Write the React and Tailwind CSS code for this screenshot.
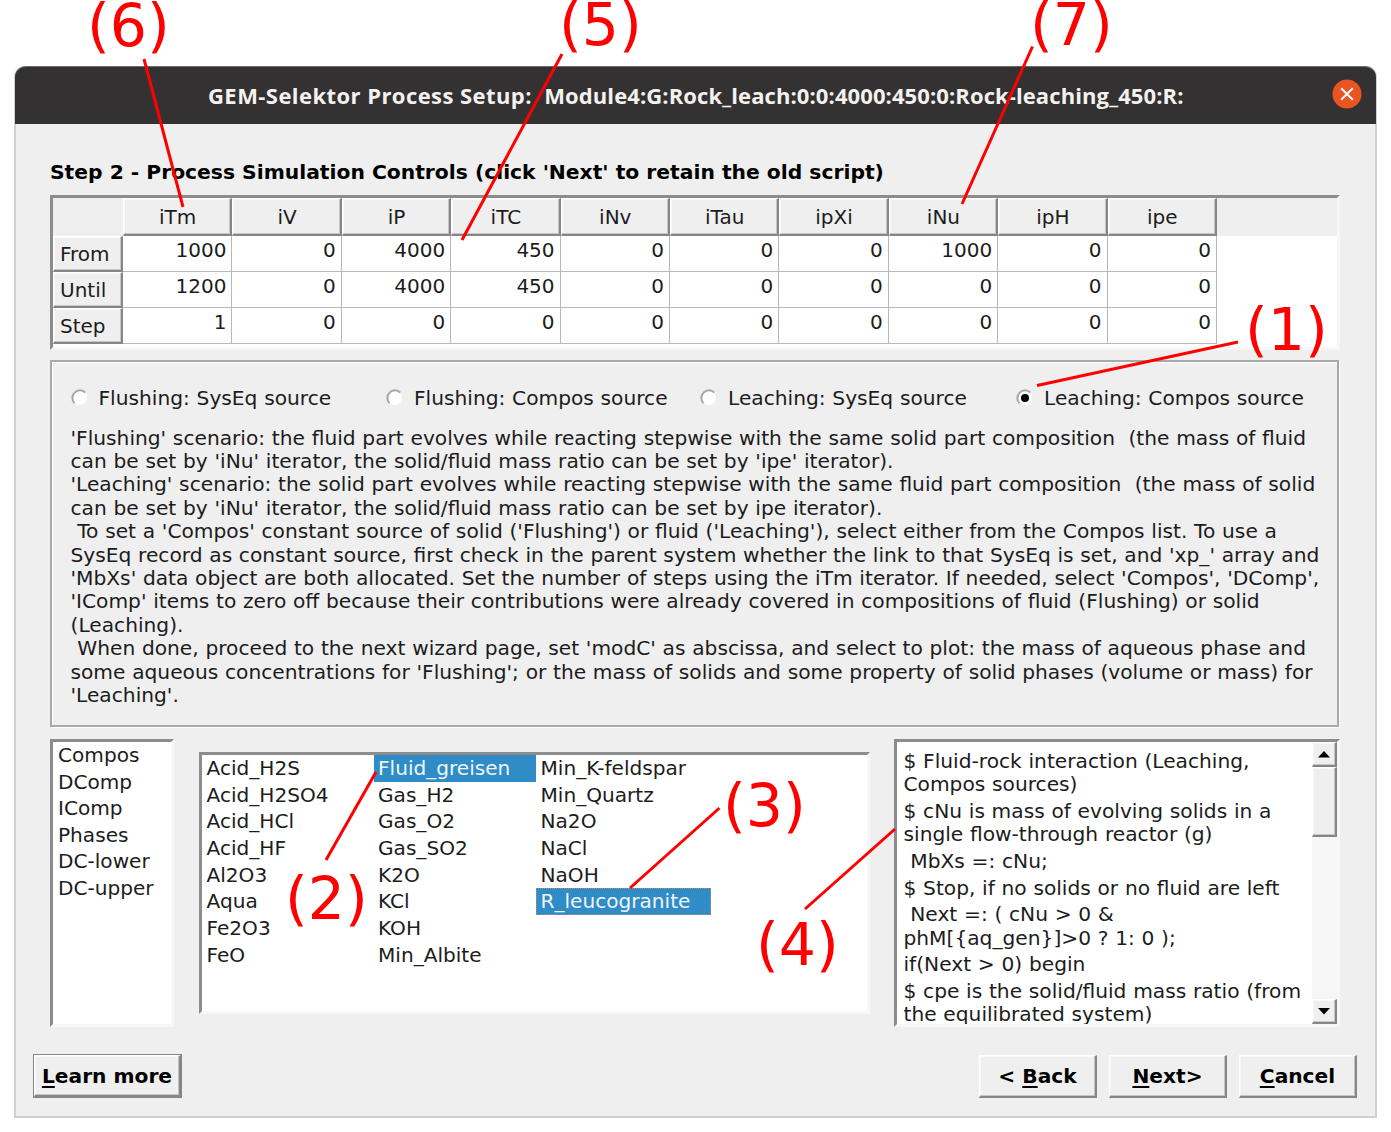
const columns = ["iTm", "iV", "iP", "iTC", "iNv", "iTau", "ipXi", "iNu", "ipH", "ipe"];
const rows = [
  ["From", 1000, 0, 4000, 450, 0, 0, 0, 1000, 0, 0],
  ["Until", 1200, 0, 4000, 450, 0, 0, 0, 0, 0, 0],
  ["Step", 1, 0, 0, 0, 0, 0, 0, 0, 0, 0],
];

const radios = [
  { label: "Flushing: SysEq source", cls: "w-[315.5px]" },
  { label: "Flushing: Compos source", cls: "w-[314px]" },
  { label: "Leaching: SysEq source", cls: "w-[316px]" },
  { label: "Leaching: Compos source", cls: "", checked: true },
];

const help = [
  "'Flushing' scenario: the fluid part evolves while reacting stepwise with the same solid part composition  (the mass of fluid",
  "can be set by 'iNu' iterator, the solid/fluid mass ratio can be set by 'ipe' iterator).",
  "'Leaching' scenario: the solid part evolves while reacting stepwise with the same fluid part composition  (the mass of solid",
  "can be set by 'iNu' iterator, the solid/fluid mass ratio can be set by ipe iterator).",
  " To set a 'Compos' constant source of solid ('Flushing') or fluid ('Leaching'), select either from the Compos list. To use a",
  "SysEq record as constant source, first check in the parent system whether the link to that SysEq is set, and 'xp_' array and",
  "'MbXs' data object are both allocated. Set the number of steps using the iTm iterator. If needed, select 'Compos', 'DComp',",
  "'IComp' items to zero off because their contributions were already covered in compositions of fluid (Flushing) or solid",
  "(Leaching).",
  " When done, proceed to the next wizard page, set 'modC' as abscissa, and select to plot: the mass of aqueous phase and",
  "some aqueous concentrations for 'Flushing'; or the mass of solids and some property of solid phases (volume or mass) for",
  "'Leaching'.",
];

const kinds = ["Compos", "DComp", "IComp", "Phases", "DC-lower", "DC-upper"];

const items = [
  { cls: "w-[171.5px]", list: ["Acid_H2S", "Acid_H2SO4", "Acid_HCl", "Acid_HF", "Al2O3", "Aqua", "Fe2O3", "FeO"] },
  { cls: "w-[162.5px]", list: ["Fluid_greisen", "Gas_H2", "Gas_O2", "Gas_SO2", "K2O", "KCl", "KOH", "Min_Albite"] },
  { cls: "w-[174.5px]", list: ["Min_K-feldspar", "Min_Quartz", "Na2O", "NaCl", "NaOH", "R_leucogranite"] },
];

const itemStyle = {
  Fluid_greisen: "bg-[#308cc6] text-[#eef5fa]",
  R_leucogranite: "bg-[#308cc6] text-[#eef5fa] outline-1 -outline-offset-1 outline-dotted outline-[#b98a6c]",
};

const script = [
  ["$ Fluid-rock interaction (Leaching,", "Compos sources)"],
  ["$ cNu is mass of evolving solids in a", "single flow-through reactor (g)"],
  [" MbXs =: cNu;"],
  ["$ Stop, if no solids or no fluid are left"],
  [" Next =: ( cNu > 0 &", "phM[{aq_gen}]>0 ? 1: 0 );"],
  ["if(Next > 0) begin"],
  ["$ cpe is the solid/fluid mass ratio (from", "the equilibrated system)"],
];

const sunken =
  "border-3 border-t-[#8c8c8c] border-l-[#8c8c8c] border-r-[#f7f7f7] border-b-[#f7f7f7] bg-white";
const raised =
  "border-t border-l border-r-2 border-b-2 border-t-white border-l-white border-r-[#868686] border-b-[#868686] bg-[#efefef] shadow-[inset_-1px_-1px_0_#c6c6c6,inset_1px_1px_0_#f8f8f8]";

function Radio({ checked }) {
  return (
    <svg className="mt-[1px] -ml-px mr-px h-5 w-5 shrink-0" viewBox="0 0 20 20">
      <circle cx="10" cy="10" r="8" fill="#fff" />
      <path d="M4.6 15.4A7.6 7.6 0 0 1 15.4 4.6" fill="none" stroke="#a6a6a6" strokeWidth="2" />
      <path d="M15.6 4.6A7.8 7.8 0 0 1 4.6 15.6" fill="none" stroke="#ebebeb" strokeWidth="1" />
      {checked && <circle cx="10" cy="10" r="4" fill="#000" />}
    </svg>
  );
}

function ArrowButton({ down }) {
  return (
    <div className={`flex h-[25px] w-full shrink-0 items-center justify-center ${raised}`}>
      <svg width="12" height="7" viewBox="0 0 12 7">
        <path d={down ? "M0 0H12L6 6.5Z" : "M0 6.5H12L6 0Z"} fill="#000" />
      </svg>
    </div>
  );
}

function Button({ before, hot, after, cls }) {
  return (
    <button className={`flex items-center justify-center whitespace-pre pt-[2px] text-[20.2px] font-bold text-black ${raised} ${cls}`}>
      <span>
        {before}
        <span className="underline decoration-2 underline-offset-3">{hot}</span>
        {after}
      </span>
    </button>
  );
}

const notes = [
  { n: 6, cls: "left-[87px] top-[-3px]", line: [144, 59, 183, 207] },
  { n: 5, cls: "left-[559px] top-[-4px]", line: [562, 54, 462, 240] },
  { n: 7, cls: "left-[1030px] top-[-4px]", line: [1032.5, 46.5, 962, 204] },
  { n: 1, cls: "left-[1245px] top-[301px]", line: [1238, 342, 1037, 385.5] },
  { n: 2, cls: "left-[285px] top-[870px]", line: [376, 772, 326, 860] },
  { n: 3, cls: "left-[723px] top-[777px]", line: [719.5, 808, 630, 888] },
  { n: 4, cls: "left-[756px] top-[916px]", line: [895, 829, 805, 909] },
];

export default function App() {
  return (
    <div className="relative h-[1132px] w-[1391px] overflow-hidden bg-white pt-[66px] pl-[14px] font-['DejaVu_Sans',sans-serif] text-[20px] leading-[23.4px] text-[#1c1c1c]">
      <div className="flex h-[1052px] w-[1363px] flex-col rounded-t-[11px] border-2 border-t-0 border-[#d0d0d0] bg-[#efefef]">
        <header className="-mx-px flex h-[58px] shrink-0 items-center rounded-t-[11px] border-t border-[#6a6a6a] bg-[#333132] pr-[14px] pl-[193px]">
          <h1 className="flex-1 whitespace-pre font-['Open_Sans',sans-serif] text-[22px] font-bold tracking-[0.09px] text-[#f4f2ee]">
            <span className="tracking-[0.44px]">GEM-Selektor Process Setup:  </span>
            Module4:G:Rock_leach:0:0:4000:450:0:Rock-leaching_450:R:
          </h1>
          <svg className="mb-[3px]" width="30" height="30" viewBox="0 0 30 30">
            <circle cx="15" cy="15" r="14.5" fill="#e95420" />
            <path d="M9.2 9.2L20.8 20.8M20.8 9.2L9.2 20.8" stroke="#fff" strokeWidth="2" />
          </svg>
        </header>

        <main className="flex flex-col pl-[34px] pt-[37px]">
          <h2 className="h-[34px] whitespace-pre text-[20.3px] font-bold text-black">
            Step 2 - Process Simulation Controls (click 'Next' to retain the old script)
          </h2>

          <section className={`flex h-[155px] w-[1290px] flex-col ${sunken}`}>
            <div className="flex h-[38px] shrink-0 bg-[#efefef] pl-[70px]">
              {columns.map((c) => (
                <div key={c} className={`flex w-[109.4px] items-center justify-center pt-[2px] pl-[1px] ${raised}`}>
                  {c}
                </div>
              ))}
            </div>
            {rows.map(([name, ...values]) => (
              <div key={name} className="flex h-9 shrink-0">
                <div className={`flex w-[70px] items-center pt-[3px] pl-[6px] ${raised}`}>{name}</div>
                {values.map((v, i) => (
                  <div key={i} className="w-[109.4px] border-r-[1.5px] border-b-[1.5px] border-[#b8b8b8] pt-[3px] pr-[5px] text-right">
                    {v}
                  </div>
                ))}
              </div>
            ))}
          </section>

          <section className="mt-[10px] h-[367px] w-[1289px] border-2 border-[#a9a9a9] pl-[18.5px] pt-[25px] text-[20.2px] shadow-[inset_1px_1px_0_#fff,1px_1px_0_#fff] [word-spacing:0.3px]">
            <div className="flex h-[39.5px]">
              {radios.map((r) => (
                <label key={r.label} className={`flex shrink-0 gap-2 whitespace-nowrap ${r.cls}`}>
                  <Radio checked={r.checked} />
                  {r.label}
                </label>
              ))}
            </div>
            <div className="whitespace-pre">
              {help.map((l, i) => (
                <p key={i}>{l}</p>
              ))}
            </div>
          </section>

          <section className="mt-[12px] flex h-[288px] w-[1290px] items-start text-[20.1px]">
            <div className={`h-[288px] w-[124px] pl-[5px] leading-[26.6px] ${sunken}`}>
              {kinds.map((k) => (
                <div key={k}>{k}</div>
              ))}
            </div>
            <div className={`mt-[13px] ml-[25px] flex h-[262px] w-[671px] leading-[26.65px] ${sunken}`}>
              {items.map((col) => (
                <div key={col.list[0]} className={col.cls}>
                  {col.list.map((t) => (
                    <div key={t} className={`pl-[4.5px] ${itemStyle[t] || ""}`}>
                      {t}
                    </div>
                  ))}
                </div>
              ))}
            </div>
            <div className={`ml-[24px] flex h-[288px] w-[446px] overflow-hidden ${sunken}`}>
              <div className="flex flex-1 flex-col gap-[3.2px] whitespace-pre pt-[8px] pl-[6.5px] text-[20.2px] [word-spacing:0.3px]">
                {script.map((p, i) => (
                  <div key={i}>
                    {p.map((l) => (
                      <p key={l}>{l}</p>
                    ))}
                  </div>
                ))}
              </div>
              <div className="flex w-[25px] flex-col bg-[#f6f6f6]">
                <ArrowButton />
                <div className={`h-[70px] w-full ${raised}`} />
                <div className="flex-1" />
                <ArrowButton down />
              </div>
            </div>
          </section>
        </main>

        <footer className="mt-[27px] flex items-center pr-[18px] pl-[17px]">
          <div className="mr-auto border border-[#858585]">
            <Button hot="L" after="earn more" cls="h-[42px] w-[147px]" />
          </div>
          <div className="flex gap-3">
            <Button before="< " hot="B" after="ack" cls="h-[43px] w-[118px]" />
            <Button hot="N" after="ext>" cls="h-[43px] w-[118px]" />
            <Button hot="C" after="ancel" cls="h-[43px] w-[118px]" />
          </div>
        </footer>
      </div>

      <svg className="pointer-events-none absolute inset-0" width="1391" height="1132" viewBox="0 0 1391 1132">
        {notes.map(({ n, line: [x1, y1, x2, y2] }) => (
          <line key={n} x1={x1} y1={y1} x2={x2} y2={y2} stroke="#f00" strokeWidth="3" />
        ))}
      </svg>
      {notes.map(({ n, cls }) => (
        <span key={n} className={`absolute text-[58.5px] leading-none text-[#ff0000] ${cls}`}>
          {`(${n})`}
        </span>
      ))}
    </div>
  );
}
